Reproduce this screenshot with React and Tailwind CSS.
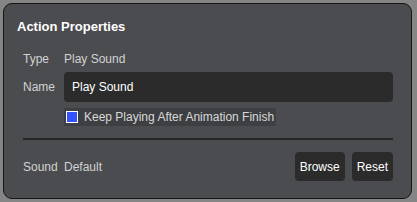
import React from 'react';

const font = { fontFamily: '"Liberation Sans", Arial, sans-serif' };

const App = () => {
    return (
        <div className="w-[417px] h-[202px] bg-[#858585] pt-[3px] pl-[3px] pr-[5px] pb-[3px]" style={font}>
            {/* Panel */}
            <div className="h-full rounded-[9px] border border-[#151515] bg-[#4b4c4f] pl-[13px] pr-[18px] pt-[15px] flex flex-col">
                <div className="text-[13px] leading-[16px] font-bold text-white">Action Properties</div>

                <div className="pl-[6px] flex flex-col">
                    {/* Type */}
                    <div className="flex items-center h-[16px] mt-[16px] text-[12px] text-[#d2d2d2]">
                        <span className="w-[41px]">Type</span>
                        <span>Play Sound</span>
                    </div>

                    {/* Name */}
                    <div className="flex items-center mt-[5px]">
                        <span className="w-[41px] text-[12px] text-[#d2d2d2]">Name</span>
                        <div className="flex-1 h-[30px] rounded-[4px] bg-[#2b2b2b] pl-[8px] flex items-center text-[12px] text-white">
                            Play Sound
                        </div>
                    </div>

                    {/* Checkbox */}
                    <div className="flex mt-[6px] pl-[41px]">
                        <div className="h-[18px] bg-[#3e3f42] flex items-center pl-[2px] pr-[2px] gap-[6px]">
                            <span className="w-[12px] h-[12px] border border-white bg-[#3452ff]" />
                            <span className="text-[12px] text-[#d8d8d8]">Keep Playing After Animation Finish</span>
                        </div>
                    </div>

                    {/* Divider */}
                    <div className="h-[2px] bg-[#262626] mt-[12px]" />

                    {/* Sound */}
                    <div className="flex items-center mt-[12px] text-[12px]">
                        <span className="w-[41px] text-[#d2d2d2]">Sound</span>
                        <span className="flex-1 text-[#d2d2d2]">Default</span>
                        <button className="h-[29px] px-[5px] rounded-[4px] bg-[#2b2b2b] text-white">Browse</button>
                        <button className="h-[29px] px-[5px] ml-[7px] rounded-[4px] bg-[#2b2b2b] text-white">Reset</button>
                    </div>
                </div>
            </div>
        </div>
    );
};

export default App;
